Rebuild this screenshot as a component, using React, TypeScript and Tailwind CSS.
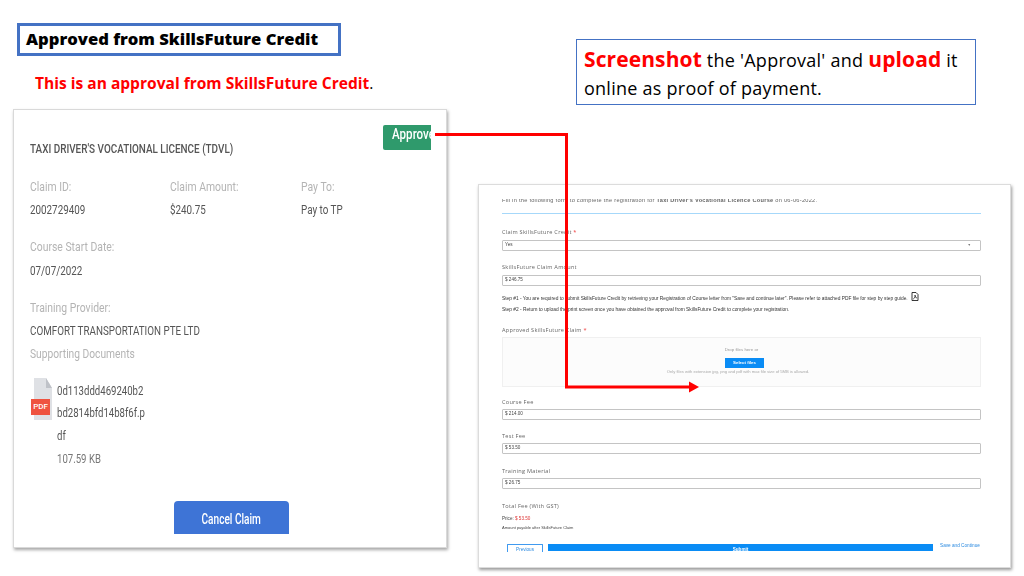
import React from "react";

const Label = ({ children, className = "" }: { children: React.ReactNode; className?: string }) => (
  <div className={`h-[12px] text-[5.6px] leading-[12px] tracking-[0.25px] text-[#666] [font-family:'Open_Sans',sans-serif] ${className}`}>{children}</div>
);

const Field = ({ value, select = false }: { value: string; select?: boolean }) => (
  <div className="flex h-[11px] items-center justify-between rounded-[1px] border border-[#c4c4c4] px-[2px] text-[4.6px] text-[#444]">
    <span>{value}</span>
    {select && <span className="mr-[7px] text-[3.5px] text-[#777]">▼</span>}
  </div>
);

const Narrow = ({ children }: { children: React.ReactNode }) => (
  <span className="block origin-left scale-x-[0.8] whitespace-nowrap">{children}</span>
);

const Detail = ({ label, value, className = "" }: { label: string; value: string; className?: string }) => (
  <div className={className}>
    <div className="-mt-[1px] mb-[1px] text-[#b4b4b4]"><Narrow>{label}</Narrow></div>
    <div className="text-[12.3px] text-[#555]"><Narrow>{value}</Narrow></div>
  </div>
);

export default function App() {
  return (
    <div className="relative flex h-[576px] w-[1024px] overflow-hidden bg-white [font-family:'Open_Sans',sans-serif]">
      {/* Left column */}
      <div className="w-[478px] shrink-0 pl-[13px]">
        <div className="mt-[23px] ml-[4px] flex h-[33px] w-[324px] items-center border-[3px] border-[#4472c4] pl-[6px] text-[16.6px] leading-none font-extrabold text-black">
          Approved from SkillsFuture Credit
        </div>
        <div className="mt-[15px] ml-[22px] h-[24px] text-[15.55px] leading-[24px] font-bold text-[#ff0000]">
          This is an approval from SkillsFuture Credit<span className="font-normal text-black">.</span>
        </div>
        <div className="mt-[14px] h-[439px] w-[434px] border border-[#d9d9d9] pr-[15px] pl-[16px] shadow-[1px_2px_3px_rgba(0,0,0,0.35)]">
          <div className="text-[13px] leading-[22.7px] [font-family:Roboto,sans-serif] blur-[0.3px]">
            <div className="flex h-[15px] justify-end">
              <div className="mt-[15px] h-[25px] w-[48px] shrink-0 overflow-hidden rounded-tl-[2px] rounded-bl-[2px] bg-[#2f9a6c] pl-[9px] text-[14.5px] leading-[19px] font-medium text-white">
                <Narrow>Approved</Narrow>
              </div>
            </div>
            <div className="mt-[13px] text-[12.4px] font-medium text-[#555]"><Narrow>TAXI DRIVER'S VOCATIONAL LICENCE (TDVL)</Narrow></div>
            <div className="mt-[16px] flex">
              <Detail className="w-[140px]" label="Claim ID:" value="2002729409" />
              <Detail className="w-[131px]" label="Claim Amount:" value="$240.75" />
              <Detail label="Pay To:" value="Pay to TP" />
            </div>
            <Detail className="mt-[15px]" label="Course Start Date:" value="07/07/2022" />
            <Detail className="mt-[15px]" label="Training Provider:" value="COMFORT TRANSPORTATION PTE LTD" />
            <div className="text-[12.8px] text-[#b4b4b4]"><Narrow>Supporting Documents</Narrow></div>
            <div className="mt-[14px] flex">
              <div className="relative mt-[-2px] ml-[3px] h-[42px] w-[24px] shrink-0">
                <svg width="20" height="42" viewBox="0 0 20 42">
                  <path d="M1 0H13L19 10V42H1Z" fill="#dfe1e5" />
                  <path d="M13 0L19 10H13Z" fill="#bfc2c8" />
                </svg>
                <div className="absolute top-[21px] left-[-2px] flex h-[16px] w-[19px] items-center justify-center bg-[#ef5340] text-[8px] leading-none font-medium text-white">PDF</div>
              </div>
              <div className="text-[12px] text-[#555]">
                <Narrow>0d113ddd469240b2</Narrow>
                <Narrow>bd2814bfd14b8f6f.p</Narrow>
                <Narrow>df</Narrow>
                <div className="text-[#777]"><Narrow>107.59 KB</Narrow></div>
              </div>
            </div>
            <div className="mt-[31px] ml-[144px] flex h-[33px] w-[115px] items-center justify-center rounded-t-[4px] bg-[#3e74d6] pt-[3px] text-[14px] font-medium text-white">
              <span className="block scale-x-[0.72] whitespace-nowrap">Cancel Claim</span>
            </div>
          </div>
        </div>
      </div>

      {/* Right column */}
      <div className="w-[546px] shrink-0">
        <div className="mt-[39px] ml-[98px] h-[66px] w-[400px] border border-[#4472c4] px-[7px] pt-[5px] text-[18px] leading-[28px] tracking-[0.25px] text-black">
          <span className="text-[21px] tracking-[0.1px] font-bold text-[#ff0000]">Screenshot</span> the 'Approval' and{" "}
          <span className="text-[21px] tracking-[0.1px] font-bold text-[#ff0000]">upload</span> it online as proof of payment.
        </div>
        <div className="mt-[79px] h-[384px] w-[533px] overflow-hidden border border-[#dcdcdc] pr-[29px] pl-[23px] shadow-[1px_2px_3px_rgba(0,0,0,0.4)]">
          <div className="text-[4.6px] [font-family:'Liberation_Sans',sans-serif] blur-[0.45px]">
            <div className="mt-[14px] h-[4px] overflow-hidden text-[5.65px] leading-[2px] tracking-[0.27px] whitespace-nowrap text-[#666]">
              Fill in the following form to complete the registration for <b>Taxi Driver's Vocational Licence Course</b> on 06-06-2022.
            </div>
            <div className="mt-[10px] border-t border-[#a6d8fa]" />
            <Label className="mt-[12px]">Claim SkillsFuture Credit <span className="text-[#e33]">*</span></Label>
            <div className="mt-[2px]"><Field value="Yes" select /></div>
            <Label className="mt-[10px]">SkillsFuture Claim Amount</Label>
            <div className="mt-[2px]"><Field value="$ 246.75" /></div>
            <div className="mt-[7px] flex h-[11px] items-center text-[4.83px] whitespace-nowrap text-[#333]">
              Step #1 - You are required to submit SkillsFuture Credit by retrieving your Registration of Course letter from "Save and continue later". Please refer to attached PDF file for step by step guide.
              <svg className="mb-[5px] ml-[3px]" width="8" height="9" viewBox="0 0 8 9" fill="none" stroke="#222" strokeWidth="0.9">
                <path d="M1 .5H5L7 2.5V8.5H1Z" />
                <path d="M2.3 7C3.8 6 4.4 4.5 4 3.2C4.4 5 5.3 6 6 6.2" />
              </svg>
            </div>
            <div className="h-[11px] text-[4.83px] leading-[11px] whitespace-nowrap text-[#333]">
              Step #2 - Return to upload the print screen once you have obtained the approval from SkillsFuture Credit to complete your registration.
            </div>
            <Label className="mt-[9px]">Approved SkillsFuture Claim <span className="text-[#e33]">*</span></Label>
            <div className="mt-[1px] flex h-[50px] flex-col items-center border border-[#f0f0f0] bg-[#fcfcfc] pt-[9px]">
              <div className="text-[4.4px] leading-[6px] text-[#999]">Drop files here or</div>
              <div className="mt-[5px] ml-[6px] flex h-[10px] w-[39px] items-center justify-center bg-[#0a8cf5] text-[4.4px] font-bold text-white">Select files</div>
              <div className="mt-[1px] mr-[7px] text-[4.15px] leading-[6px] text-[#aaa]">Only files with extension jpg, png and pdf with max file size of 5MB is allowed.</div>
            </div>
            <Label className="mt-[9px]">Course Fee</Label>
            <div className="mt-[1px]"><Field value="$ 214.00" /></div>
            <Label className="mt-[10px]">Test Fee</Label>
            <div className="mt-[1px]"><Field value="$ 53.50" /></div>
            <Label className="mt-[11px]">Training Material</Label>
            <div className="mt-[1px]"><Field value="$ 26.75" /></div>
            <Label className="mt-[11px]">Total Fee (With GST)</Label>
            <div className="mt-[2px] h-[9px] text-[4.6px] leading-[9px] text-[#444]">
              Price: <span className="text-[#d33]">$ 53.50</span>
            </div>
            <div className="mt-[1px] h-[8px] text-[4px] leading-[8px] text-[#444]">Amount payable after SkillsFuture Claim</div>
            <div className="mt-[12px] flex h-[19px] items-start">
              <div className="ml-[5px] h-[8px] w-[36px] overflow-hidden rounded-t-[1px] border border-b-0 border-[#3f9af0] text-center text-[4.6px] leading-[10px] text-[#2b8ae0]">Previous</div>
              <div className="ml-[5px] h-[7px] w-[385px] overflow-hidden bg-[#0a8cf5] text-center text-[4.6px] leading-[11px] font-bold text-white">Submit</div>
              <div className="-mt-[2px] ml-[7px] text-[4.7px] leading-[8px] whitespace-nowrap text-[#2b8ae0]">Save and Continue</div>
            </div>
          </div>
        </div>
      </div>

      {/* Connector arrow lying over both columns */}
      <svg className="pointer-events-none absolute inset-0" width="1024" height="576" viewBox="0 0 1024 576" fill="none">
        <path d="M435 134.5H566.5V387H690" stroke="#ff0000" strokeWidth="3" />
        <path d="M689 381.5L699 387L689 392.5Z" fill="#ff0000" />
      </svg>
    </div>
  );
}
